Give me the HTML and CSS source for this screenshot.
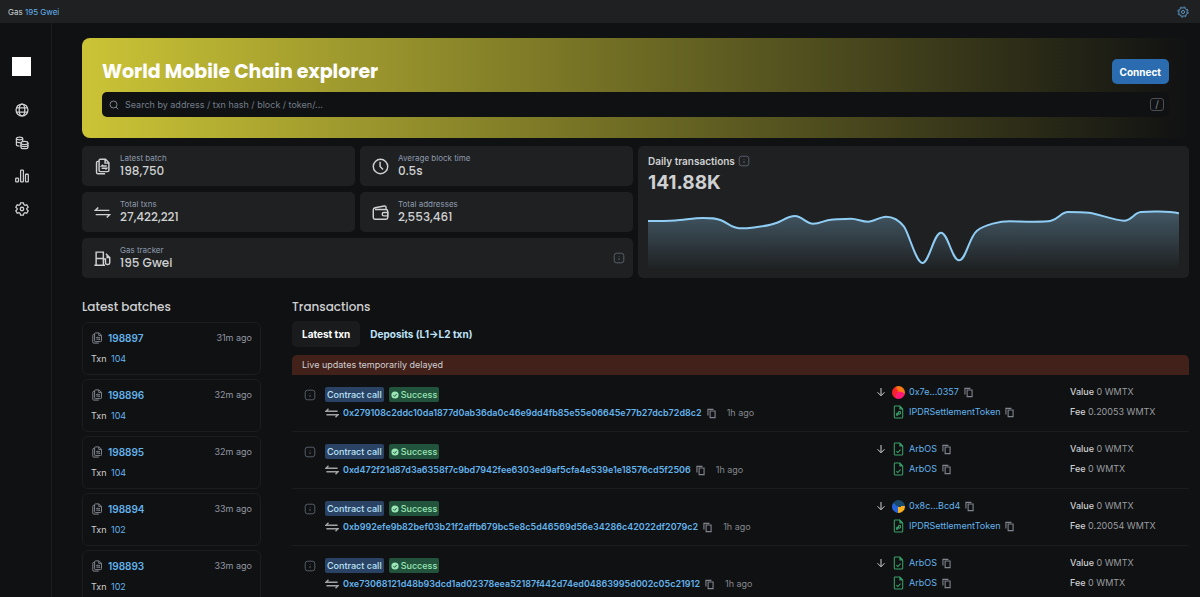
FILE: index.html
```html
<!DOCTYPE html>
<html lang="en">
<head>
  <meta charset="UTF-8">
  <meta name="viewport" content="width=device-width, initial-scale=1.0">
  <title>World Mobile Chain explorer</title>
  <link rel="stylesheet" href="styles.css">
</head>
<body>
  <!-- icon sprite -->
  <svg class="sprite" aria-hidden="true">
    <symbol id="i-gear" viewBox="0 0 20 20">
      <path d="M8 1.200h4l.7 2.600 1.500.9 2.600-.7 2 3.400-1.900 1.900v1.400l1.900 1.900-2 3.400-2.600-.7-1.500.9-.7 2.600H8l-.7-2.600-1.500-.9-2.600.7-2-3.400 1.900-1.900V9.300L1.200 7.400l2-3.400 2.600.7 1.500-.9z"/>
      <circle cx="10" cy="10" r="2.500"/>
    </symbol>
    <symbol id="i-cog" viewBox="0 0 20 20">
      <circle cx="10" cy="10" r="7"/>
      <circle cx="10" cy="10" r="8.600" stroke-dasharray="3.400 3.350"/>
      <circle cx="10" cy="10" r="2.600"/>
    </symbol>
    <symbol id="i-globe" viewBox="0 0 20 20">
      <circle cx="10" cy="10" r="8.500"/>
      <ellipse cx="10" cy="10" rx="4" ry="8.500"/>
      <path d="M2.300 7h15.400M2.300 13h15.400"/>
    </symbol>
    <symbol id="i-coins" viewBox="0 0 20 20">
      <path d="M2 3.500v9c0 1 2 1.800 4.500 1.800M11 3.500V7M2 8c1 1 4 1.500 6 1"/>
      <ellipse cx="6.500" cy="3.500" rx="4.500" ry="2"/>
      <path d="M8.500 10v6c0 1.200 2.200 2.200 5 2.200s5-1 5-2.200v-6"/>
      <ellipse cx="13.500" cy="10" rx="5" ry="2.300"/>
      <path d="M8.500 13c0 1.200 2.200 2.200 5 2.200s5-1 5-2.200"/>
    </symbol>
    <symbol id="i-bars" viewBox="0 0 20 20">
      <rect x="1" y="13" width="4" height="5.500" rx="1"/>
      <rect x="8" y="1.500" width="4" height="17" rx="1"/>
      <rect x="15" y="7.500" width="4" height="11" rx="1"/>
    </symbol>
    <symbol id="i-search" viewBox="0 0 20 20">
      <circle cx="9" cy="9" r="7"/>
      <path d="M14 14l4.500 4.500"/>
    </symbol>
    <symbol id="i-batch" viewBox="0 0 20 20">
      <path d="M7.500 1.500h6l4 4v9q0 1.500-1.500 1.500H7.500Q6 16 6 14.500V3q0-1.500 1.500-1.500zM13 2v4h4"/>
      <path d="M6 4H4.500Q3 4 3 5.500V17q0 1.500 1.500 1.500H13"/>
      <path d="M15 9.500H9l1.500-1.500M9 12h6l-1.500 1.500"/>
    </symbol>
    <symbol id="i-swap" viewBox="0 0 20 20">
      <path d="M5 4L1.500 7.500H18M15 16l3.500-3.500H2"/>
    </symbol>
    <symbol id="i-clock" viewBox="0 0 20 20">
      <circle cx="10" cy="10" r="8.500"/>
      <path d="M9.500 4.500V10l3.500 3.500"/>
    </symbol>
    <symbol id="i-wallet" viewBox="0 0 20 20">
      <path d="M16.500 7V4q0-2-2-1.700L3.500 4.500Q1.500 5 1.500 7M3.500 6.500h13q2 0 2 2v7.500q0 2-2 2h-13q-2 0-2-2V7"/>
      <path d="M18.500 10H14q-2 0-2 2t2 2h4.500z"/>
    </symbol>
    <symbol id="i-pump" viewBox="0 0 20 20">
      <path d="M2.500 18V2.500H11V18M.5 18H13M2.500 10H11"/>
      <path d="M11 10.500h2.500V15q0 2 2 2h1q2 0 2-2V9L14 4.500M15.500 6v3h3"/>
    </symbol>
    <symbol id="i-hint" viewBox="0 0 20 20">
      <rect x="2" y="2" width="16" height="16" rx="4"/>
      <path d="M10 7v1M10 10v3.500"/>
    </symbol>
    <symbol id="i-copy" viewBox="0 0 20 20">
      <path d="M7.500 5.500h9v12h-9zM3.500 13.500v-11h10"/>
    </symbol>
    <symbol id="i-down" viewBox="0 0 20 20">
      <path d="M10 2v15M3 10.500l7 7 7-7"/>
    </symbol>
    <symbol id="i-contract" viewBox="0 0 16 20">
      <path d="M3 1.500h7l4 4V17q0 1.500-1.500 1.500h-9Q2 18.500 2 17V2.500Q2 1.500 3 1.500zM10 1.500v4h4"/>
      <path d="M5 13l2 2 4-4"/>
    </symbol>
    <symbol id="i-token" viewBox="0 0 16 20">
      <path d="M3 1.500h7l4 4V17q0 1.500-1.500 1.500h-9Q2 18.500 2 17V2.500Q2 1.500 3 1.500zM10 1.500v4h4"/>
      <path d="M5 13.500q0-2 2-2v3q-2 1-2-1zM8 9.500q3-1 3 1.500t-2.500 2z"/>
    </symbol>
    <symbol id="i-check" viewBox="0 0 20 20">
      <circle cx="10" cy="10" r="9" fill="#9ae6b4" stroke="none"/>
      <path d="M6 10.500l3 3 5-6" stroke="#22543d"/>
    </symbol>
  </svg>

  <header class="topbar">
    <p>Gas <a href="#">195 Gwei</a></p>
    <button class="icon-button" aria-label="Settings"><svg class="icon icon-md"><use href="#i-cog"/></svg></button>
  </header>

  <div class="layout">
    <nav class="sidebar">
      <a class="logo" href="#" aria-label="Home"></a>
      <a href="#" aria-label="Blockchain"><svg class="icon icon-lg"><use href="#i-globe"/></svg></a>
      <a href="#" aria-label="Tokens"><svg class="icon icon-lg"><use href="#i-coins"/></svg></a>
      <a href="#" aria-label="Charts"><svg class="icon icon-lg"><use href="#i-bars"/></svg></a>
      <a href="#" aria-label="Other"><svg class="icon icon-lg"><use href="#i-gear"/></svg></a>
    </nav>

    <main class="content">
      <section class="hero">
        <div class="hero-head">
          <h1>World Mobile Chain explorer</h1>
          <button class="connect">Connect</button>
        </div>
        <form class="search">
          <svg class="icon icon-sm"><use href="#i-search"/></svg>
          <input type="text" aria-label="Search" placeholder="Search by address / txn hash / block / token/...">
          <kbd>/</kbd>
        </form>
      </section>

      <section class="overview">
        <div class="stats">
          <div class="stat">
            <svg class="icon icon-stat"><use href="#i-batch"/></svg>
            <div><p class="stat-label">Latest batch</p><p class="stat-value">198,750</p></div>
          </div>
          <div class="stat">
            <svg class="icon icon-stat"><use href="#i-clock"/></svg>
            <div><p class="stat-label">Average block time</p><p class="stat-value">0.5s</p></div>
          </div>
          <div class="stat">
            <svg class="icon icon-stat"><use href="#i-swap"/></svg>
            <div><p class="stat-label">Total txns</p><p class="stat-value">27,422,221</p></div>
          </div>
          <div class="stat">
            <svg class="icon icon-stat"><use href="#i-wallet"/></svg>
            <div><p class="stat-label">Total addresses</p><p class="stat-value">2,553,461</p></div>
          </div>
          <div class="stat stat-wide">
            <svg class="icon icon-stat"><use href="#i-pump"/></svg>
            <div><p class="stat-label">Gas tracker</p><p class="stat-value">195 Gwei</p></div>
            <svg class="icon icon-md hint"><use href="#i-hint"/></svg>
          </div>
        </div>

        <div class="chart-card">
          <p class="chart-title">Daily transactions <svg class="icon icon-md hint"><use href="#i-hint"/></svg></p>
          <p class="chart-value">141.88K</p>
          <svg class="chart" viewBox="0 0 531 65" preserveAspectRatio="none">
            <defs>
              <linearGradient id="area" x1="0" y1="0" x2="0" y2="1">
                <stop offset="0" stop-color="#90cdf4" stop-opacity=".32"/>
                <stop offset="1" stop-color="#90cdf4" stop-opacity="0"/>
              </linearGradient>
            </defs>
            <path fill="url(#area)" d="M0 16C10 16 18 16 27 15.500S46 13 55 13S67 13 73 15.300S84 23 91 23.300S103 22.700 109 22S123 20 129 17.700S140 11 147 11S158 18.700 165 18.700S177 15 183 14.700S197 13.700 203 13.700S214 16.700 220 16.700S232 11.700 238 11.700S251 15 256 21.700S268 58 274.500 58S286 27.700 293 27.700S304 55.300 311 55.300S321 32 329 25.700S352 16.300 362 16.300S395 17.500 403 15.700S413 7 420 7S434 7 441 7.700S468 15.700 476 15.700S486 7.500 493 7S520 6 531 8.300V65H0z"/>
            <path class="chart-line" d="M0 16C10 16 18 16 27 15.500S46 13 55 13S67 13 73 15.300S84 23 91 23.300S103 22.700 109 22S123 20 129 17.700S140 11 147 11S158 18.700 165 18.700S177 15 183 14.700S197 13.700 203 13.700S214 16.700 220 16.700S232 11.700 238 11.700S251 15 256 21.700S268 58 274.500 58S286 27.700 293 27.700S304 55.300 311 55.300S321 32 329 25.700S352 16.300 362 16.300S395 17.500 403 15.700S413 7 420 7S434 7 441 7.700S468 15.700 476 15.700S486 7.500 493 7S520 6 531 8.300"/>
          </svg>
        </div>
      </section>

      <div class="columns">
        <section class="batches">
          <h2>Latest batches</h2>
          <article class="batch">
            <div class="batch-head"><svg class="icon icon-md"><use href="#i-batch"/></svg><a href="#">198897</a><time>31m ago</time></div>
            <p>Txn <a href="#">104</a></p>
          </article>
          <article class="batch">
            <div class="batch-head"><svg class="icon icon-md"><use href="#i-batch"/></svg><a href="#">198896</a><time>32m ago</time></div>
            <p>Txn <a href="#">104</a></p>
          </article>
          <article class="batch">
            <div class="batch-head"><svg class="icon icon-md"><use href="#i-batch"/></svg><a href="#">198895</a><time>32m ago</time></div>
            <p>Txn <a href="#">104</a></p>
          </article>
          <article class="batch">
            <div class="batch-head"><svg class="icon icon-md"><use href="#i-batch"/></svg><a href="#">198894</a><time>33m ago</time></div>
            <p>Txn <a href="#">102</a></p>
          </article>
          <article class="batch">
            <div class="batch-head"><svg class="icon icon-md"><use href="#i-batch"/></svg><a href="#">198893</a><time>33m ago</time></div>
            <p>Txn <a href="#">102</a></p>
          </article>
        </section>

        <section class="transactions">
          <h2>Transactions</h2>
          <div class="tabs">
            <button class="tab active">Latest txn</button>
            <button class="tab">Deposits (L1→L2 txn)</button>
          </div>
          <p class="notice">Live updates temporarily delayed</p>

          <article class="txn">
            <svg class="icon icon-md hint"><use href="#i-hint"/></svg>
            <div class="txn-main">
              <div class="tags"><span class="tag tag-call">Contract call</span><span class="tag tag-ok"><svg class="icon icon-xs"><use href="#i-check"/></svg>Success</span></div>
              <div class="hash"><svg class="icon icon-swap"><use href="#i-swap"/></svg><a href="#">0x279108c2ddc10da1877d0ab36da0c46e9dd4fb85e55e06645e77b27dcb72d8c2</a><svg class="icon icon-copy copy"><use href="#i-copy"/></svg><time>1h ago</time></div>
            </div>
            <div class="parties">
              <svg class="icon icon-sm arrow"><use href="#i-down"/></svg>
              <div class="party"><span class="avatar avatar-red"></span><a href="#">0x7e...0357</a><svg class="icon icon-copy copy"><use href="#i-copy"/></svg></div>
              <div class="party"><svg class="icon icon-doc"><use href="#i-token"/></svg><a href="#">IPDRSettlementToken</a><svg class="icon icon-copy copy"><use href="#i-copy"/></svg></div>
            </div>
            <div class="amounts"><p><b>Value</b> 0 WMTX</p><p><b>Fee</b> 0.20053 WMTX</p></div>
          </article>

          <article class="txn">
            <svg class="icon icon-md hint"><use href="#i-hint"/></svg>
            <div class="txn-main">
              <div class="tags"><span class="tag tag-call">Contract call</span><span class="tag tag-ok"><svg class="icon icon-xs"><use href="#i-check"/></svg>Success</span></div>
              <div class="hash"><svg class="icon icon-swap"><use href="#i-swap"/></svg><a href="#">0xd472f21d87d3a6358f7c9bd7942fee6303ed9af5cfa4e539e1e18576cd5f2506</a><svg class="icon icon-copy copy"><use href="#i-copy"/></svg><time>1h ago</time></div>
            </div>
            <div class="parties">
              <svg class="icon icon-sm arrow"><use href="#i-down"/></svg>
              <div class="party"><svg class="icon icon-doc"><use href="#i-contract"/></svg><a href="#">ArbOS</a><svg class="icon icon-copy copy"><use href="#i-copy"/></svg></div>
              <div class="party"><svg class="icon icon-doc"><use href="#i-contract"/></svg><a href="#">ArbOS</a><svg class="icon icon-copy copy"><use href="#i-copy"/></svg></div>
            </div>
            <div class="amounts"><p><b>Value</b> 0 WMTX</p><p><b>Fee</b> 0 WMTX</p></div>
          </article>

          <article class="txn">
            <svg class="icon icon-md hint"><use href="#i-hint"/></svg>
            <div class="txn-main">
              <div class="tags"><span class="tag tag-call">Contract call</span><span class="tag tag-ok"><svg class="icon icon-xs"><use href="#i-check"/></svg>Success</span></div>
              <div class="hash"><svg class="icon icon-swap"><use href="#i-swap"/></svg><a href="#">0xb992efe9b82bef03b21f2affb679bc5e8c5d46569d56e34286c42022df2079c2</a><svg class="icon icon-copy copy"><use href="#i-copy"/></svg><time>1h ago</time></div>
            </div>
            <div class="parties">
              <svg class="icon icon-sm arrow"><use href="#i-down"/></svg>
              <div class="party"><span class="avatar avatar-blue"></span><a href="#">0x8c...Bcd4</a><svg class="icon icon-copy copy"><use href="#i-copy"/></svg></div>
              <div class="party"><svg class="icon icon-doc"><use href="#i-token"/></svg><a href="#">IPDRSettlementToken</a><svg class="icon icon-copy copy"><use href="#i-copy"/></svg></div>
            </div>
            <div class="amounts"><p><b>Value</b> 0 WMTX</p><p><b>Fee</b> 0.20054 WMTX</p></div>
          </article>

          <article class="txn">
            <svg class="icon icon-md hint"><use href="#i-hint"/></svg>
            <div class="txn-main">
              <div class="tags"><span class="tag tag-call">Contract call</span><span class="tag tag-ok"><svg class="icon icon-xs"><use href="#i-check"/></svg>Success</span></div>
              <div class="hash"><svg class="icon icon-swap"><use href="#i-swap"/></svg><a href="#">0xe73068121d48b93dcd1ad02378eea52187f442d74ed04863995d002c05c21912</a><svg class="icon icon-copy copy"><use href="#i-copy"/></svg><time>1h ago</time></div>
            </div>
            <div class="parties">
              <svg class="icon icon-sm arrow"><use href="#i-down"/></svg>
              <div class="party"><svg class="icon icon-doc"><use href="#i-contract"/></svg><a href="#">ArbOS</a><svg class="icon icon-copy copy"><use href="#i-copy"/></svg></div>
              <div class="party"><svg class="icon icon-doc"><use href="#i-contract"/></svg><a href="#">ArbOS</a><svg class="icon icon-copy copy"><use href="#i-copy"/></svg></div>
            </div>
            <div class="amounts"><p><b>Value</b> 0 WMTX</p><p><b>Fee</b> 0 WMTX</p></div>
          </article>
        </section>
      </div>
    </main>
  </div>
</body>
</html>
```

FILE: styles.css
```css
* {
  box-sizing: border-box;
}

html {
  scrollbar-width: none;
}

body {
  margin: 0;
  background-color: #101112;
  color: #cfd0d1;
  font-family: Inter, "Liberation Sans", sans-serif;
  font-size: 10px;
  line-height: 16px;
}

h1, h2, p {
  margin: 0;
}

a {
  color: #63b3ed;
  text-decoration: none;
}

button, input, kbd {
  font: inherit;
}

button {
  border: none;
  cursor: pointer;
}

/* icons */
.sprite {
  position: absolute;
  width: 0;
  height: 0;
}

.icon {
  flex: none;
  fill: none;
  stroke: currentColor;
  stroke-width: 1.5;
}

.icon-xs { width: 8px; height: 8px; stroke-width: 2.5; }
.icon-sm { width: 10px; height: 10px; stroke-width: 2; }
.icon-copy { width: 11px; height: 11px; stroke-width: 2; }
.icon-md { width: 12px; height: 12px; }
.icon-lg { width: 14px; height: 14px; stroke-width: 1.8; }
.icon-stat { width: 17px; height: 17px; stroke-width: 1.7; }
.icon-doc { width: 13px; height: 14px; color: #38a169; }
.icon-swap { width: 14px; height: 14px; color: #a0a3a6; stroke-width: 2; }

.hint {
  color: #5d6673;
}

.copy {
  color: #7f858e;
}

/* top bar and side menu */
.topbar {
  display: flex;
  align-items: center;
  justify-content: space-between;
  height: 23px;
  padding: 0 11px 0 8px;
  background-color: #1e2022;
  font-size: 8px;
}

.icon-button {
  display: flex;
  padding: 0;
  background: none;
  color: #63a0cf;
}

.layout {
  display: flex;
}

.sidebar {
  display: flex;
  flex-direction: column;
  align-items: center;
  gap: 19px;
  width: 52px;
  padding: 34px 8px 0 0;
  border-right: 1px solid #1b1c1e;
}

.sidebar a {
  display: flex;
  color: #cfd0d1;
}

.sidebar .logo {
  width: 19px;
  height: 19px;
  margin-bottom: 8px;
  background-color: #fff;
}

.content {
  flex: 1;
  min-width: 0;
  padding: 15px 11px 0 30px;
}

/* hero */
.hero {
  display: flex;
  flex-direction: column;
  gap: 8px;
  padding: 21px 20px;
  border-radius: 8px;
  background: linear-gradient(90deg, #cbc436, #101112);
}

.hero-head {
  display: flex;
  align-items: center;
  justify-content: space-between;
}

h1 {
  color: #fff;
  font-family: Poppins, Inter, sans-serif;
  font-size: 19px;
  font-weight: 700;
  line-height: 24px;
}

.connect {
  height: 25px;
  padding: 0 8px;
  border-radius: 5px;
  background-color: #2b6cb0;
  color: #fff;
  font-weight: 700;
}

.search {
  display: flex;
  align-items: center;
  gap: 6px;
  height: 25px;
  padding: 0 5px 0 7px;
  border-radius: 5px;
  background-color: #101112;
  color: #7c8591;
}

.search input {
  flex: 1;
  padding: 0;
  border: none;
  outline: none;
  background: none;
  color: #cfd0d1;
  font-size: 9px;
}

.search input::placeholder {
  color: #727d8c;
}

kbd {
  width: 14px;
  height: 13px;
  border: 1px solid #4d4f52;
  border-radius: 3px;
  line-height: 11px;
  text-align: center;
}

/* stats and chart */
.overview {
  display: grid;
  grid-template-columns: 1fr 1fr;
  gap: 5px;
  margin-top: 8px;
}

.stats {
  display: grid;
  grid-template-columns: 1fr 1fr;
  gap: 6px 5px;
}

.stat {
  display: flex;
  align-items: center;
  gap: 9px;
  height: 40px;
  padding: 0 8px 0 12px;
  border-radius: 5px;
  background-color: #1e2021;
}

.stat-wide {
  grid-column: span 2;
}

.stat .hint {
  margin-left: auto;
}

.stat-label {
  color: #8e9aae;
  font-size: 8px;
  line-height: 10px;
}

.stat-value {
  font-family: Poppins, Inter, sans-serif;
  font-size: 12px;
  font-weight: 500;
  line-height: 16px;
}

.chart-card {
  display: flex;
  flex-direction: column;
  padding: 7px 10px 8px;
  border-radius: 5px;
  background-color: #1e2021;
}

.chart-title {
  display: flex;
  align-items: center;
  gap: 3px;
  font-weight: 600;
}

.chart-value {
  font-size: 19px;
  font-weight: 700;
  line-height: 28px;
}

.chart {
  display: block;
  width: 100%;
  height: 65px;
  margin-top: auto;
}

.chart-line {
  fill: none;
  stroke: #90cdf4;
  stroke-width: 2;
}

/* lower part */
.columns {
  display: flex;
  gap: 31px;
  margin-top: 21px;
}

h2 {
  margin-bottom: 6px;
  color: #cfd0d1;
  font-family: Poppins, Inter, sans-serif;
  font-size: 12px;
  font-weight: 500;
  line-height: 16px;
}

.batches {
  display: flex;
  flex-direction: column;
  gap: 4px;
  width: 179px;
}

.batches h2 {
  margin-bottom: 3px;
}

.batch {
  padding: 7px 8px;
  border: 1px solid #1b1d1f;
  border-radius: 6px;
  font-size: 9px;
}

.batch-head {
  display: flex;
  align-items: center;
  gap: 5px;
  margin-bottom: 5px;
  color: #8a9099;
}

.batch-head a {
  font-size: 10px;
  font-weight: 600;
}

.batch-head time {
  margin-left: auto;
  color: #9096a3;
}

.batch p a {
  margin-left: 2px;
}

.transactions {
  flex: 1;
  min-width: 0;
}

.tabs {
  display: flex;
  margin-bottom: 8px;
}

.tab {
  height: 26px;
  padding: 0 10px;
  border-radius: 5px;
  background: none;
  color: #bee3f8;
  font-weight: 700;
}

.tab.active {
  background-color: #1a1b1d;
  color: #fff;
}

.notice {
  padding: 2px 10px;
  border-radius: 5px 5px 0 0;
  background-color: #42211a;
  font-size: 9px;
}

.txn {
  display: grid;
  grid-template-columns: 21px 1fr 194px 119px;
  align-items: start;
  padding: 9px 0 0 12px;
  min-height: 57px;
  border-bottom: 1px solid #1b1c1e;
}

.txn > .hint {
  margin-top: 5px;
}

.tags {
  display: flex;
  gap: 5px;
  margin: 3px 0;
}

.tag {
  display: flex;
  align-items: center;
  gap: 2px;
  height: 15px;
  padding: 0 2px;
  border-radius: 2px;
  font-size: 9px;
  font-weight: 500;
}

.tag-call {
  background-color: #2a4365;
  color: #bee3f8;
}

.tag-ok {
  background-color: #22543d;
  color: #9ae6b4;
}

.hash {
  display: flex;
  align-items: center;
  gap: 4px;
  font-size: 9px;
  font-weight: 600;
}

.hash time {
  margin-left: 6px;
  color: #84888e;
  font-weight: 400;
}

.parties {
  display: grid;
  grid-template-columns: 10px 1fr;
  column-gap: 6px;
  row-gap: 4px;
}

.parties .arrow {
  margin-top: 3px;
}

.party {
  display: flex;
  grid-column: 2;
  align-items: center;
  gap: 4px;
  font-size: 9px;
}

.party:nth-of-type(1) {
  grid-row: 1;
}

.avatar {
  width: 13px;
  height: 13px;
  border-radius: 50%;
}

.avatar-red {
  background: radial-gradient(circle at 65% 80%, #ff1a75 32%, transparent 38%), linear-gradient(60deg, #f5222d 45%, #fa7a14 60%);
}

.avatar-blue {
  background: conic-gradient(from 75deg at 50% 55%, #f6b021 0 105deg, #2463d8 110deg 230deg, #18486a 235deg);
}

.amounts {
  display: grid;
  gap: 4px;
  color: #9a9da1;
  font-size: 9px;
}

.amounts b {
  color: #cfd0d1;
  font-weight: 500;
}
```
